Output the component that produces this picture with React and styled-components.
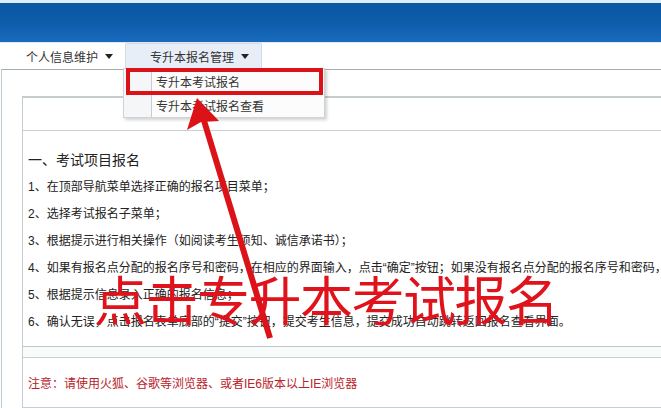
import React from "react";
import styled, { createGlobalStyle } from "styled-components";

const GlobalStyle = createGlobalStyle`
  html, body {
    margin: 0;
    padding: 0;
    background: #ffffff;
  }
  body {
    font-family: "Liberation Sans", "Noto Sans CJK SC", sans-serif;
    color: #222;
    overflow: hidden;
  }
`;

const Page = styled.div`
  position: relative;
  width: 661px;
  height: 408px;
  overflow: hidden;
`;

const Header = styled.div`
  height: 39px;
  border-top: 3px solid #dcecf8;
  background: linear-gradient(180deg, #0a57a4 0%, #0d5eac 55%, #1a6bbd 100%);
`;

const Nav = styled.div`
  position: relative;
  display: flex;
  align-items: stretch;
  height: 26px;
  padding-left: 25px;
  border-top: 1px solid #dfe8f0;
`;

const NavItem = styled.div`
  display: flex;
  align-items: center;
  gap: 7px;
  height: 24px;
  padding: ${(p) => (p.$active ? "0 12px 0 24px" : "0 11px 0 0")};
  font-size: 12px;
  color: #333;
  background: ${(p) => (p.$active ? "#e8eef8" : "transparent")};
  border: 1px solid ${(p) => (p.$active ? "#d4dce8" : "transparent")};
  border-bottom: none;
  border-radius: 2px 2px 0 0;
`;

const Caret = styled.span`
  width: 0;
  height: 0;
  border-left: 4px solid transparent;
  border-right: 4px solid transparent;
  border-top: 5px solid #222;
`;

const Dropdown = styled.div`
  position: absolute;
  left: 123px;
  top: 25px;
  width: 200px;
  background: linear-gradient(90deg, #f4f6f8 0, #f4f6f8 27px, #fcfcfc 27px);
  border: 1px solid #d0d4d8;
  box-shadow: 2px 2px 3px rgba(0, 0, 0, 0.18);
  z-index: 3;
`;

const DropItem = styled.div`
  display: flex;
  align-items: center;
  height: 24px;
  padding-left: 32px;
  font-size: 12px;
  color: #333;
`;

const Separator = styled.div`
  position: absolute;
  left: 27px;
  top: 0;
  bottom: 0;
  border-left: 1px solid #c8ccd0;
`;

const Highlight = styled.div`
  position: absolute;
  left: 126px;
  top: 68px;
  width: 189px;
  height: 19px;
  border: 4px solid #dc1219;
  z-index: 4;
`;

const Outer = styled.div`
  margin-left: 1px;
  padding: 26px 0 0 20px;
  border-left: 1px solid #bcc8d0;
  border-top: 1px solid #a8acb0;
`;

const Box = styled.div`
  border-left: 1px solid #c4ccd0;
  border-top: 2px solid #c4cccc;
`;

const Row = styled.div`
  height: ${(p) => p.$h}px;
  border-bottom: 1px solid #c8d0d4;
  background: ${(p) => p.$bg || "#ffffff"};
`;

const Content = styled.div`
  padding: 16px 0 10px 5px;
  border-bottom: 1px solid #c0c8cc;
`;

const Title = styled.div`
  font-size: 14px;
  line-height: 27px;
  color: #222;
`;

const Line = styled.div`
  font-size: 12px;
  line-height: 27px;
  white-space: nowrap;
  color: #222;
`;

const Note = styled.div`
  display: flex;
  align-items: center;
  height: 49px;
  padding-left: 5px;
  font-size: 12px;
  color: #b8222a;
  border-bottom: 1px solid #c8d0d4;
  white-space: nowrap;
`;

const Arrow = styled.svg`
  position: absolute;
  left: 0;
  top: 0;
  z-index: 5;
  pointer-events: none;
`;

const BigText = styled.div`
  position: absolute;
  left: 94px;
  top: 268px;
  font-family: "Noto Sans CJK SC", sans-serif;
  font-size: 53px;
  line-height: 60px;
  letter-spacing: -1.5px;
  color: #e0121b;
  white-space: nowrap;
  z-index: 6;
`;

const steps = [
  "1、在顶部导航菜单选择正确的报名项目菜单；",
  "2、选择考试报名子菜单；",
  "3、根据提示进行相关操作（如阅读考生须知、诚信承诺书）；",
  "4、如果有报名点分配的报名序号和密码，在相应的界面输入，点击“确定”按钮；如果没有报名点分配的报名序号和密码，",
  "5、根据提示信息录入正确的报名信息；",
  "6、确认无误，点击报名表单底部的“提交”按钮，提交考生信息，提交成功自动跳转返回报名查看界面。",
];

export default function App() {
  return (
    <Page>
      <GlobalStyle />
      <Header />
      <Nav>
        <NavItem>
          个人信息维护
          <Caret />
        </NavItem>
        <NavItem $active>
          专升本报名管理
          <Caret />
        </NavItem>
        <Dropdown>
          <Separator />
          <DropItem>专升本考试报名</DropItem>
          <DropItem>专升本考试报名查看</DropItem>
        </Dropdown>
      </Nav>
      <Outer>
        <Box>
          <Row $h={32} />
          <Content>
            <Title>一、考试项目报名</Title>
            {steps.map((s) => (
              <Line key={s}>{s}</Line>
            ))}
          </Content>
          <Row $h={10} $bg="#f9fbfb" />
          <Note>注意：请使用火狐、谷歌等浏览器、或者IE6版本以上IE浏览器</Note>
        </Box>
      </Outer>
      <Highlight />
      <Arrow width="661" height="408" viewBox="0 0 661 408">
        <line x1="202" y1="114" x2="270" y2="338" stroke="#dc1219" strokeWidth="6" />
        <polygon points="197,98 187,130 201,122 219,121" fill="#dc1219" />
      </Arrow>
      <BigText>点击专升本考试报名</BigText>
    </Page>
  );
}
